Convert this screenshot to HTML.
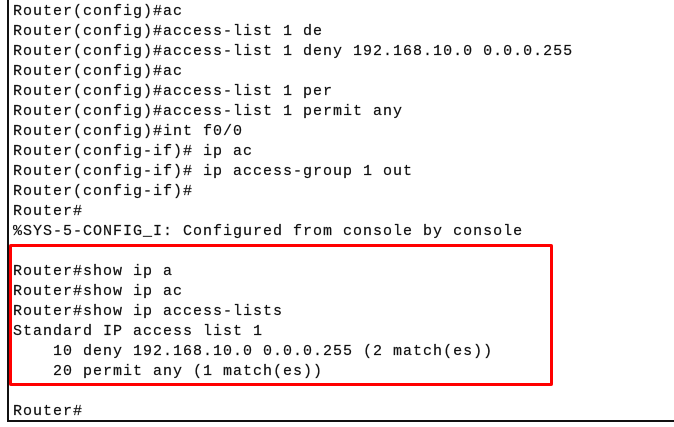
<!DOCTYPE html>
<html><head><style>
html,body{margin:0;padding:0;background:#fff;width:674px;height:427px;overflow:hidden;position:relative}
.frame{position:absolute;left:7px;top:-2px;width:680px;height:422px;border-left:2px solid #111;border-bottom:2px solid #111}
.t{position:absolute;left:13px;font-family:"Liberation Mono",monospace;font-size:15px;letter-spacing:1px;color:#111;white-space:pre;line-height:20px;-webkit-text-stroke:0.2px #111}
.red{position:absolute;left:9px;top:244px;width:538px;height:136px;border:3px solid #f00;border-radius:2px}
</style></head><body>
<div class="frame"></div>
<div class="t" style="top:2px">Router(config)#ac
Router(config)#access-list 1 de
Router(config)#access-list 1 deny 192.168.10.0 0.0.0.255
Router(config)#ac
Router(config)#access-list 1 per
Router(config)#access-list 1 permit any
Router(config)#int f0/0
Router(config-if)# ip ac
Router(config-if)# ip access-group 1 out
Router(config-if)#
Router#
%SYS-5-CONFIG_I: Configured from console by console

Router#show ip a
Router#show ip ac
Router#show ip access-lists
Standard IP access list 1
    10 deny 192.168.10.0 0.0.0.255 (2 match(es))
    20 permit any (1 match(es))

Router#</div>
<div class="red"></div>
</body></html>
